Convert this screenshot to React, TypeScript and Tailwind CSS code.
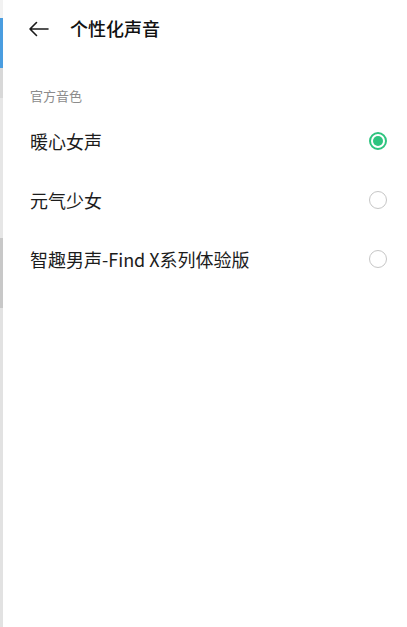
import React, { useState } from 'react'

const voices = ['暖心女声', '元气少女', '智趣男声-Find X系列体验版']

const font = { fontFamily: '"Noto Sans CJK SC", "Noto Sans", sans-serif' }

const Radio: React.FC<{ checked: boolean }> = ({ checked }) =>
  checked ? (
    <span className="flex h-[18px] w-[18px] items-center justify-center rounded-full border-2 border-[#2ec47f]">
      <span className="h-[10px] w-[10px] rounded-full bg-[#2ec47f]" />
    </span>
  ) : (
    <span className="h-[18px] w-[18px] rounded-full border-[1.5px] border-[#c6c6c6]" />
  )

export default function App() {
  const [selected, setSelected] = useState(0)

  return (
    <div className="flex h-[627px] w-[407px] bg-white" style={font}>
      {/* 左侧露出的底层页面 */}
      <div className="flex w-[3px] flex-col bg-[#e2e2e2]">
        <div className="h-[18px] bg-[#f2f2f2]" />
        <div className="h-[50px] bg-[#4a9de0]" />
        <div className="h-[30px] bg-[#d8d8d8]" />
        <div className="h-[140px] bg-[#e6e6e6]" />
        <div className="h-[70px] bg-[#c8c8c8]" />
      </div>

      <div className="flex flex-1 flex-col">
        {/* 顶部栏 */}
        <div className="flex h-[57px] items-center pl-[25px]">
          <svg width="22" height="16" viewBox="0 0 22 16" fill="none" stroke="#1a1a1a" strokeWidth="1.6" strokeLinecap="round" strokeLinejoin="round">
            <path d="M20 8H2M8.5 1.5 2 8l6.5 6.5" />
          </svg>
          <span className="ml-[20px] text-[18px] font-medium text-[#111]">个性化声音</span>
        </div>

        {/* 官方音色 */}
        <div className="mt-[29px] pl-[27px] text-[13px] text-[#8c8c8c]">官方音色</div>

        <div className="mt-[6px] flex flex-col">
          {voices.map((v, i) => (
            <button
              key={v}
              onClick={() => setSelected(i)}
              className="flex h-[59px] items-center justify-between pl-[27px] pr-[20px] text-left"
            >
              <span className="text-[18px] text-[#1c1c1c]">{v}</span>
              <Radio checked={selected === i} />
            </button>
          ))}
        </div>
      </div>
    </div>
  )
}
